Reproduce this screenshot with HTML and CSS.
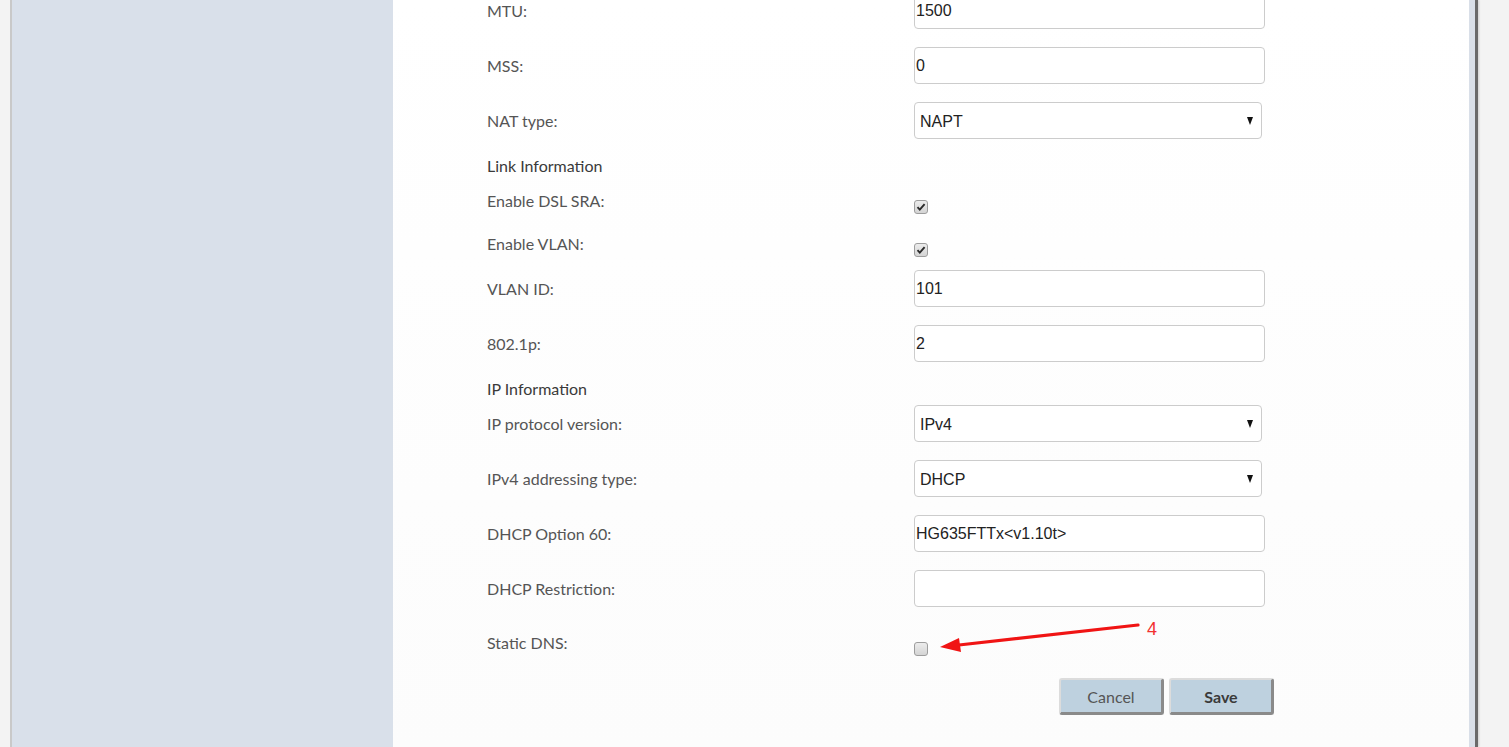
FILE: index.html
```html
<!DOCTYPE html>
<html lang="en">
<head>
    <meta charset="UTF-8">
    <meta name="viewport" content="width=device-width, initial-scale=1.0">
    <title>WAN Settings</title>
    <link rel="stylesheet" href="styles.css">
</head>
<body>
    <div class="page">
        <div class="gutter"></div>
        <aside class="sidebar"></aside>
        <main class="content">
            <form class="wan-form">
                <div class="row">
                    <label>MTU:</label>
                    <input class="text" type="text" value="1500">
                </div>
                <div class="row">
                    <label>MSS:</label>
                    <input class="text" type="text" value="0">
                </div>
                <div class="row">
                    <label>NAT type:</label>
                    <div class="select-wrap">
                        <select class="select"><option>NAPT</option></select>
                        <span class="caret"></span>
                    </div>
                </div>

                <h3 class="section first">Link Information</h3>
                <div class="row check-row">
                    <label>Enable DSL SRA:</label>
                    <span class="check">
                        <svg width="12" height="12" viewBox="0 0 12 12"><path d="M2.5 6.2 L4.8 8.6 L9.6 3.2" fill="none" stroke="#2a2a2a" stroke-width="1.9"/></svg>
                    </span>
                </div>
                <div class="row check-row last">
                    <label>Enable VLAN:</label>
                    <span class="check">
                        <svg width="12" height="12" viewBox="0 0 12 12"><path d="M2.5 6.2 L4.8 8.6 L9.6 3.2" fill="none" stroke="#2a2a2a" stroke-width="1.9"/></svg>
                    </span>
                </div>
                <div class="row">
                    <label>VLAN ID:</label>
                    <input class="text" type="text" value="101">
                </div>
                <div class="row">
                    <label>802.1p:</label>
                    <input class="text" type="text" value="2">
                </div>

                <h3 class="section second">IP Information</h3>
                <div class="row">
                    <label>IP protocol version:</label>
                    <div class="select-wrap">
                        <select class="select"><option>IPv4</option></select>
                        <span class="caret"></span>
                    </div>
                </div>
                <div class="row">
                    <label>IPv4 addressing type:</label>
                    <div class="select-wrap">
                        <select class="select"><option>DHCP</option></select>
                        <span class="caret"></span>
                    </div>
                </div>
                <div class="row">
                    <label>DHCP Option 60:</label>
                    <input class="text" type="text" value="HG635FTTx&lt;v1.10t&gt;">
                </div>
                <div class="row spaced">
                    <label>DHCP Restriction:</label>
                    <input class="text" type="text" value="">
                </div>
                <div class="row check-row dns">
                    <label>Static DNS:</label>
                    <span class="check"></span>
                </div>

                <div class="actions">
                    <button type="button" class="btn">Cancel</button>
                    <button type="button" class="btn btn-save">Save</button>
                </div>
            </form>

            <!-- annotation arrow -->
            <svg class="marker" width="240" height="45" viewBox="0 0 240 45">
                <line x1="203" y1="10" x2="24" y2="30" stroke="#f01414" stroke-width="3.2" stroke-linecap="round"/>
                <polygon points="5,32 26,37 24,23" fill="#f01414"/>
                <text x="212" y="20" class="marker-num">4</text>
            </svg>
        </main>
        <div class="edge"></div>
    </div>
</body>
</html>
```

FILE: styles.css
```css
body {
    margin: 0;
    padding: 0;
    background-color: #f3f3f3;
    font-family: Lato, "Liberation Sans", sans-serif;
}
.page {
    display: flex;
    height: 747px;
    overflow: hidden;
}
.gutter {
    width: 10px;
    background-color: #f3f3f3;
    border-right: 2px solid #c9c9c9;
}
.sidebar {
    width: 381px;
    background-color: #d9e0ea;
}
.content {
    position: relative;
    width: 1076px;
    background: linear-gradient(#ffffff, #fcfcfc);
}
.edge {
    width: 6px;
    background-color: #d9dfe8;
    border-right: 3px solid #6a6a6a;
    box-shadow: 1px 0 2px rgba(0, 0, 0, 0.15);
}

/* Form */
.wan-form {
    width: 787px;
    margin-top: -8px;
    padding-left: 94px;
}
.row {
    display: flex;
    align-items: center;
    height: 37px;
    margin-bottom: 18px;
}
.row label {
    width: 427px;
    flex-shrink: 0;
    font-size: 16px;
    color: #555;
    line-height: 22px;
}
.text {
    box-sizing: border-box;
    width: 351px;
    height: 37px;
    padding: 0 1px;
    border: 1px solid #cccccc;
    border-radius: 4px;
    font-family: "Liberation Sans", Arial, sans-serif;
    font-size: 16px;
    color: #222;
    background: #fff;
    outline: none;
}
.select-wrap {
    position: relative;
}
.select {
    box-sizing: border-box;
    width: 348px;
    height: 37px;
    padding: 1px 0 0 5px;
    border: 1px solid #cccccc;
    border-radius: 4px;
    font-family: "Liberation Sans", Arial, sans-serif;
    font-size: 16px;
    color: #222;
    background: #fff;
    appearance: none;
    -webkit-appearance: none;
    outline: none;
}
.caret {
    position: absolute;
    right: 9px;
    top: 15px;
    border-left: 3.5px solid transparent;
    border-right: 3.5px solid transparent;
    border-top: 8px solid #111;
}
.section {
    margin: 0 0 15px;
    font-size: 16px;
    font-weight: normal;
    color: #3a3a3a;
    line-height: 18px;
}
.section.second {
    margin-bottom: 7px;
}
.check-row {
    align-items: flex-start;
    height: 25px;
}
.check-row.last {
    margin-bottom: 12px;
}
.row.spaced {
    margin-bottom: 25px;
}
.check-row.dns {
    margin-bottom: 21px;
}
.check {
    box-sizing: border-box;
    display: flex;
    align-items: center;
    justify-content: center;
    width: 14px;
    height: 14px;
    margin-top: 10px;
    border: 1px solid #9d9d9d;
    border-radius: 3px;
    background: linear-gradient(#ececec, #d4d4d4);
}
.actions {
    display: flex;
    justify-content: flex-end;
    gap: 5px;
}
.btn {
    box-sizing: border-box;
    height: 37px;
    width: 105px;
    border-style: solid;
    border-width: 2px 3px 3px 2px;
    border-color: #dcdcdc #8a8a8a #8a8a8a #dcdcdc;
    border-radius: 3px;
    background-color: #bed1df;
    font-family: Lato, "Liberation Sans", sans-serif;
    font-size: 16px;
    color: #555;
    cursor: pointer;
}
.btn-save {
    color: #3a3a3a;
    font-weight: bold;
}

/* annotation */
.marker {
    position: absolute;
    left: 542px;
    top: 615px;
}
.marker-num {
    font-family: "Liberation Sans", Arial, sans-serif;
    font-size: 18px;
    fill: #f23030;
}
```
